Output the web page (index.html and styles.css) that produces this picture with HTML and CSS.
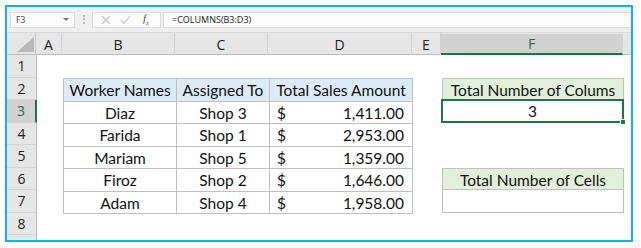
FILE: index.html
```html
<!DOCTYPE html>
<html lang="en">
<head>
    <meta charset="UTF-8">
    <meta name="viewport" content="width=device-width, initial-scale=1.0">
    <title>COLUMNS function</title>
    <link rel="stylesheet" href="styles.css">
</head>
<body>
    <div class="frame">
        <div class="formula-bar">
            <div class="name-box"><span>F3</span><span class="caret"></span></div>
            <div class="grip"></div>
            <div class="fx-buttons">
                <svg class="btn" width="10" height="10" viewBox="0 0 10 10"><path d="M1 1 L9 9 M9 1 L1 9" stroke="#c4c4c4" stroke-width="1.2" fill="none"/></svg>
                <svg class="btn" width="11" height="10" viewBox="0 0 11 10"><path d="M1 5 L4 8.5 L10 1" stroke="#c4c4c4" stroke-width="1.2" fill="none"/></svg>
                <span class="fx">f<sub>x</sub></span>
            </div>
            <div class="formula">=COLUMNS(B3:D3)</div>
        </div>

        <div class="col-heads">
            <div class="corner">
                <svg width="17" height="15" viewBox="0 0 17 15"><polygon points="0,15 17,15 17,0" fill="#b9b9b9"/></svg>
            </div>
            <div class="col-head">A</div>
            <div class="col-head">B</div>
            <div class="col-head">C</div>
            <div class="col-head">D</div>
            <div class="col-head">E</div>
            <div class="col-head selected">F</div>
            <div class="col-head last"></div>
        </div>

        <div class="sheet-body">
            <div class="row-heads">
                <div class="row-head">1</div>
                <div class="row-head">2</div>
                <div class="row-head selected">3</div>
                <div class="row-head">4</div>
                <div class="row-head">5</div>
                <div class="row-head">6</div>
                <div class="row-head">7</div>
                <div class="row-head">8</div>
                <div class="row-head last"></div>
            </div>

            <div class="cells">
                <div class="data">
                    <div class="th">Worker Names</div>
                    <div class="th">Assigned To</div>
                    <div class="th">Total Sales Amount</div>

                    <div class="td">Diaz</div>
                    <div class="td">Shop 3</div>
                    <div class="td money"><span>$</span><span>1,411.00</span></div>

                    <div class="td">Farida</div>
                    <div class="td">Shop 1</div>
                    <div class="td money"><span>$</span><span>2,953.00</span></div>

                    <div class="td">Mariam</div>
                    <div class="td">Shop 5</div>
                    <div class="td money"><span>$</span><span>1,359.00</span></div>

                    <div class="td">Firoz</div>
                    <div class="td">Shop 2</div>
                    <div class="td money"><span>$</span><span>1,646.00</span></div>

                    <div class="td">Adam</div>
                    <div class="td">Shop 4</div>
                    <div class="td money"><span>$</span><span>1,958.00</span></div>
                </div>

                <div class="result-head cols-head">Total Number of Colums</div>
                <div class="result-value cols-value">3</div>

                <div class="result-head cells-head">Total Number of Cells</div>
                <div class="result-value cells-value"></div>
            </div>
        </div>
    </div>
</body>
</html>
```

FILE: styles.css
```css
body {
    margin: 0;
    padding: 0;
    background-color: #fff;
    font-family: Lato, "Open Sans", sans-serif;
}
.frame {
    margin: 5px;
    width: 628px;
    height: 237px;
    box-sizing: border-box;
    border: 2px solid #12b0ee;
    overflow: hidden;
    background-color: #fff;
}

/* formula bar */
.formula-bar {
    height: 26px;
    display: flex;
    align-items: center;
    background-color: #f0f0f0;
    border-bottom: 1px solid #dadada;
    box-sizing: border-box;
}
.name-box {
    width: 65px;
    height: 16px;
    margin-left: 3px;
    padding: 0 5px;
    box-sizing: border-box;
    display: flex;
    align-items: center;
    justify-content: space-between;
    background-color: #fcfcfc;
    border: 1px solid #dedede;
    font-family: "Open Sans", sans-serif;
    font-size: 8.5px;
    color: #444;
}
.caret {
    width: 0;
    height: 0;
    border-left: 3px solid transparent;
    border-right: 3px solid transparent;
    border-top: 3px solid #777;
}
.grip {
    width: 0;
    height: 9px;
    margin: 0 7px 0 8px;
    border-left: 2px dotted #b8b8b8;
}
.fx-buttons {
    width: 69px;
    height: 16px;
    box-sizing: border-box;
    display: flex;
    align-items: center;
    padding-left: 8px;
    background-color: #fcfcfc;
    border: 1px solid #dedede;
}
.fx-buttons .btn {
    margin-right: 9px;
}
.fx {
    margin-left: 3px;
    font-family: "Liberation Serif", serif;
    font-style: italic;
    font-size: 11px;
    color: #555;
}
.fx sub {
    font-size: 7px;
}
.formula {
    flex: 1;
    height: 16px;
    margin-left: 2px;
    padding-left: 8px;
    box-sizing: border-box;
    display: flex;
    align-items: center;
    background-color: #fcfcfc;
    border: 1px solid #dedede;
    border-right: none;
    font-family: "Open Sans", sans-serif;
    font-size: 9px;
    color: #222;
}

/* headers */
.col-heads {
    height: 22px;
    display: grid;
    grid-template-columns: 29px 26px 113px 93px 144px 29px 182px 1fr;
    background-color: #e6e6e6;
    border-bottom: 1px solid #bdbdbd;
    box-sizing: border-box;
}
.corner {
    display: flex;
    align-items: flex-end;
    justify-content: flex-end;
    padding: 0 1px 3px 0;
    border-right: 1px solid #c8c8c8;
}
.col-head {
    display: flex;
    align-items: center;
    justify-content: center;
    border-right: 1px solid #d2d2d2;
    font-family: "Open Sans", sans-serif;
    font-size: 14px;
    color: #222;
}
.col-head.selected {
    margin-top: 1px;
    background-color: #d2d2d2;
    border-bottom: 2px solid #217346;
    color: #217346;
}
.col-head.last {
    border-right: none;
}

.sheet-body {
    display: flex;
    height: 185px;
}
.row-heads {
    width: 29px;
    display: flex;
    flex-direction: column;
    background-color: #e6e6e6;
    border-right: 1px solid #bdbdbd;
}
.row-head {
    height: 22.5px;
    flex: none;
    box-sizing: border-box;
    display: flex;
    align-items: center;
    justify-content: center;
    border-bottom: 1px solid #d4d4d4;
    font-family: "Open Sans", sans-serif;
    font-size: 14px;
    color: #222;
}
.row-head.selected {
    margin-right: -1px;
    background-color: #d2d2d2;
    border-right: 2px solid #217346;
    color: #217346;
}
.row-head.last {
    flex: 1;
    border-bottom: none;
}

/* cell area */
.cells {
    flex: 1;
    display: grid;
    grid-template-columns: 26px 113px 93px 144px 29px 182px 1fr;
    grid-template-rows: 23px 22px 23px 22px 23px 22px 23px 22px 1fr;
}
.data {
    grid-column: 2 / 5;
    grid-row: 2 / 8;
    display: grid;
    grid-template-columns: 112px 92px 1fr;
    grid-auto-rows: 1fr;
    gap: 1px;
    background-color: #c0c0c0;
    border: 1px solid #c0c0c0;
    margin-bottom: -1px;
}
.th, .td {
    display: flex;
    align-items: center;
    justify-content: center;
    padding-top: 1px;
    font-size: 15.5px;
    color: #111;
    background-color: #fff;
}
.th {
    background-color: #ddebf7;
}
.td.money {
    justify-content: space-between;
    padding: 1px 8px 0 7px;
}

.result-head {
    grid-column: 6;
    display: flex;
    align-items: center;
    justify-content: center;
    padding-top: 1px;
    font-size: 15.5px;
    color: #111;
    background-color: #e2efda;
    border: 1px solid #c0c0c0;
    border-bottom: none;
}
.cols-head {
    grid-row: 2;
}
.cells-head {
    grid-row: 6;
    border-bottom: 1px solid #c0c0c0;
}
.result-value {
    grid-column: 6;
    display: flex;
    align-items: center;
    justify-content: center;
    font-size: 15.5px;
    color: #111;
}
.cols-value {
    grid-row: 3;
    position: relative;
    margin: -1px 0 0 -1px;
    border: 2px solid #217346;
}
.cols-value::after {
    content: "";
    position: absolute;
    right: -4px;
    bottom: -4px;
    width: 4px;
    height: 4px;
    background-color: #217346;
    border: 1px solid #fff;
}
.cells-value {
    grid-row: 7;
    border: 1px solid #c0c0c0;
    border-top: none;
}
```
